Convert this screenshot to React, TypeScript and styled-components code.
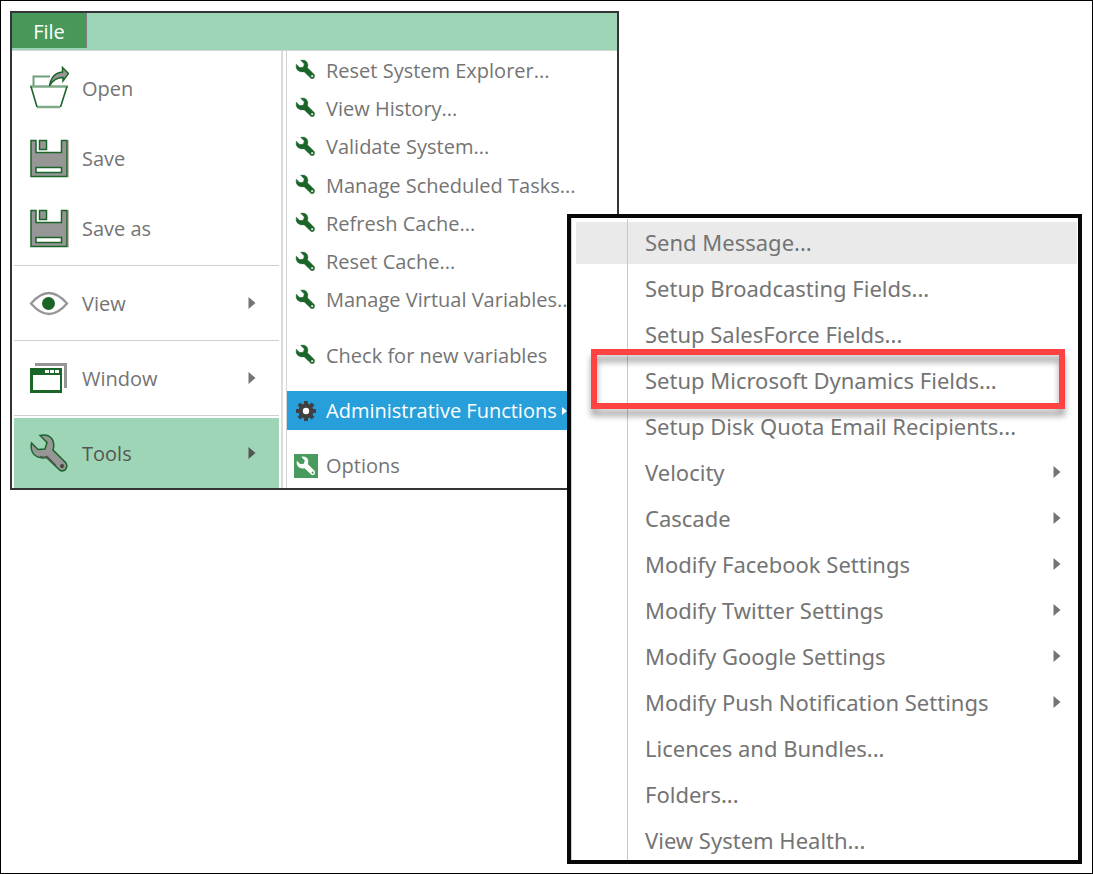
import React from "react";
import styled, { createGlobalStyle } from "styled-components";

const GlobalStyle = createGlobalStyle`
  *, *::before, *::after { box-sizing: border-box; }
  body {
    margin: 0;
    background: #fff;
    font-family: "Open Sans", "Noto Sans", sans-serif;
    color: #747474;
  }
  button { font: inherit; color: inherit; border: 0; background: none; padding: 0; text-align: left; }
  ul { list-style: none; margin: 0; padding: 0; }
`;

const Page = styled.main`
  min-height: 100vh;
  border: 1px solid #000;
  padding: 10px 9px;
`;

const Workspace = styled.div`
  position: relative;
`;

const FileMenu = styled.section`
  max-width: 609px;
  border: 2px solid #333436;
  background: #fff;
`;

const TabBar = styled.header`
  display: flex;
  align-items: flex-start;
  height: 38px;
  background: #9ed5b6;
  border-bottom: 1px solid #d4d4d4;
`;

const FileTab = styled.button`
  width: 75px;
  height: 35px;
  background: #489859;
  border-right: 1px solid #808080;
  color: #fff;
  font-size: 20px;
  line-height: 38px;
  text-align: center;
`;

const Columns = styled.div`
  display: flex;
`;

const MainColumn = styled.ul`
  flex: 0 0 271px;
  padding: 2px 2px 0;
  border-right: 2px solid #dcdcdc;
`;

const MainItem = styled.button<{ $active?: boolean }>`
  display: flex;
  align-items: center;
  width: 100%;
  height: 70px;
  padding: 0 23px 0 15px;
  font-size: 20px;
  color: ${(p) => (p.$active ? "#555" : "#747474")};
  background: ${(p) => (p.$active ? "#9ed5b6" : "transparent")};
`;

const MainLabel = styled.span`
  flex: 1;
  margin-left: 13px;
`;

const MainRule = styled.li`
  height: 5px;
  padding-top: 2px;
  &::before { content: ""; display: block; height: 1px; background: #cfcfcf; }
`;

const ToolColumn = styled.ul`
  flex: 1;
  display: flex;
  flex-direction: column;
  margin-left: 3px;
  padding-bottom: 3px;
  border-left: 1px solid #d4d4d4;
`;

const ToolEntry = styled.li`
  flex: 1;
  display: flex;
`;

const ToolItem = styled.button<{ $active?: boolean }>`
  display: flex;
  align-items: center;
  width: 100%;
  padding-left: 7px;
  font-size: 20px;
  line-height: 24px;
  white-space: nowrap;
  color: ${(p) => (p.$active ? "#fff" : "#747474")};
  background: ${(p) => (p.$active ? "#269fdb" : "transparent")};
`;

const ToolLabel = styled.span`
  margin: 0 5px 0 8px;
  padding-top: 1px;
`;

const ToolGap = styled.li`
  height: 17px;
`;

const Submenu = styled.ul`
  position: absolute;
  top: 203px;
  left: 557px;
  width: 515px;
  display: flex;
  flex-direction: column;
  gap: 4px;
  padding: 4px 1px 0 5px;
  border: 4px solid #080808;
  background: #fff;
  box-shadow: inset 1px 0 #d0d0d0;
  overflow: hidden;

  &::after {
    content: "";
    position: absolute;
    top: 1px;
    bottom: 0;
    left: 56px;
    width: 1px;
    background: #c8c8c8;
  }
`;

const SubEntry = styled.li`
  position: relative;
  &:last-child { margin-bottom: -2px; }
`;

const SubItem = styled.button<{ $hover?: boolean }>`
  display: flex;
  align-items: center;
  justify-content: space-between;
  width: 100%;
  height: 42px;
  padding: 0 16px 2px 69px;
  font-family: "Noto Sans", "Open Sans", sans-serif;
  font-size: 22px;
  white-space: nowrap;
  background: ${(p) => (p.$hover ? "#eaeaea" : "transparent")};
`;

const Highlight = styled.div`
  position: absolute;
  z-index: 1;
  top: -11px;
  left: 15px;
  right: 12px;
  height: 60px;
  border: 6px solid #ff4343;
  filter: drop-shadow(0 7px 3px rgba(0, 0, 0, 0.35));
  pointer-events: none;
`;

const Svg = styled.svg`
  display: block;
  flex: none;
`;

const GREEN = "#1b6529";
const GREY = "#969696";
const WRENCH =
  "M10 1.5Q18-.5 22 5Q25 10 23 16L36 29Q38 33 35 36Q31 38 29 35.5L16.5 23.5Q9 25 4 20.5Q0 16 1.5 9L8 15.5L15 15L17 8.5Z";

const Arrow = () => (
  <Svg width="8" height="12" viewBox="0 0 8 12" aria-hidden>
    <path d="M0.5 0L7.5 6L0.5 12Z" fill="currentColor" />
  </Svg>
);

const SmallArrow = () => (
  <Svg width="5" height="8" viewBox="0 0 5 8" aria-hidden>
    <path d="M0 0L5 4L0 8Z" fill="currentColor" />
  </Svg>
);

const BigIcon = ({ children }: { children: React.ReactNode }) => (
  <Svg width="40" height="44" viewBox="0 0 40 44" fill="none" aria-hidden>
    {children}
  </Svg>
);

const OpenIcon = () => (
  <BigIcon>
    <path d="M4.5 20V10.500H21" stroke="#6f9f79" strokeWidth="2" />
    <path d="M1 20.500H39M8 41H31" stroke="#7fab88" strokeWidth="2.500" />
    <path d="M2 20.500L8 41M38 20.500L31.500 41" stroke={GREEN} strokeWidth="1.600" />
    <path
      d="M20.500 20C22 11 27 6.500 33.500 6V1.500L39.500 7.500L34 15V11.500C28 11.500 24 13.500 20.500 20Z"
      fill={GREY}
      stroke={GREEN}
      strokeWidth="1.500"
    />
  </BigIcon>
);

const SaveIcon = () => (
  <BigIcon>
    <path d="M39.500 4V41.500" stroke="#c9b9b9" />
    <path d="M2 4.500H7V16.500H32.500V4.500H38V40.500H2Z" fill={GREY} stroke={GREEN} strokeWidth="1.500" />
    <path d="M10.500 4.500H17.500V13.500H10.500Z" fill={GREY} stroke={GREEN} strokeWidth="1.500" />
    <path d="M7 31.500H32.500V36.500H7Z" fill="#fff" stroke={GREEN} strokeWidth="1.500" />
  </BigIcon>
);

const ViewIcon = () => (
  <BigIcon>
    <path
      d="M2 22.500Q11 12 20 12Q29 12 38 22.500Q29 33 20 33Q11 33 2 22.500Z"
      fill="#fff"
      stroke={GREY}
      strokeWidth="2.300"
    />
    <circle cx="19.500" cy="22.500" r="6.500" fill={GREEN} />
  </BigIcon>
);

const WindowIcon = () => (
  <BigIcon>
    <path d="M6 8.500H36.500V32" stroke={GREY} strokeWidth="3" />
    <path d="M1 12H33V37H1Z" fill={GREEN} />
    <path d="M4 19H31V34H4Z" fill="#fff" />
    <path d="M16 14h4v3h-4zM21 14h4v3h-4zM26 14h4v3h-4z" fill="#fff" />
  </BigIcon>
);

const ToolsIcon = () => (
  <BigIcon>
    <g transform="translate(1 3)">
      <path d={WRENCH} fill={GREY} stroke={GREEN} strokeWidth="1.500" />
      <path d="M10 22.500Q14 24 17 22.500L26 31.500" stroke="#555" strokeWidth="1.500" />
      <circle cx="32" cy="32" r="2" fill="#444" />
    </g>
  </BigIcon>
);

const WrenchIcon = () => (
  <Svg width="24" height="24" viewBox="0 0 24 24" aria-hidden>
    <g transform="translate(1.500 1.500) scale(.52)">
      <path d={WRENCH} fill={GREEN} stroke={GREEN} />
      <circle cx="32" cy="32" r="2.200" fill="#cfe0d2" />
    </g>
  </Svg>
);

const GearIcon = () => (
  <Svg width="24" height="24" viewBox="0 0 24 24" aria-hidden>
    <g fill="#404040">
      {[0, 45, 90, 135].map((angle) => (
        <rect key={angle} x="10" y="2" width="4" height="20" transform={`rotate(${angle} 12 12)`} />
      ))}
      <circle cx="12" cy="12" r="7.500" />
    </g>
    <circle cx="12" cy="12" r="3.200" fill="#fff" />
  </Svg>
);

const OptionsIcon = () => (
  <Svg width="24" height="24" viewBox="0 0 24 24" aria-hidden>
    <path d="M0 0H24V24H0Z" fill="#489b5d" />
    <g transform="translate(2 2) scale(.52)">
      <path d={WRENCH} fill="#fff" />
      <circle cx="32" cy="32" r="2" fill="#489b5d" />
    </g>
  </Svg>
);

type MainEntry = { label: string; icon: React.ReactNode; ruled?: boolean; arrow?: boolean; active?: boolean };

const mainEntries: MainEntry[] = [
  { label: "Open", icon: <OpenIcon /> },
  { label: "Save", icon: <SaveIcon /> },
  { label: "Save as", icon: <SaveIcon /> },
  { label: "View", icon: <ViewIcon />, ruled: true, arrow: true },
  { label: "Window", icon: <WindowIcon />, ruled: true, arrow: true },
  { label: "Tools", icon: <ToolsIcon />, ruled: true, arrow: true, active: true },
];

const toolGroups = [
  [
    "Reset System Explorer...",
    "View History...",
    "Validate System...",
    "Manage Scheduled Tasks...",
    "Refresh Cache...",
    "Reset Cache...",
    "Manage Virtual Variables...",
  ],
  ["Check for new variables"],
  ["Administrative Functions"],
  ["Options"],
];

const adminEntries = [
  { label: "Send Message...", hover: true },
  { label: "Setup Broadcasting Fields..." },
  { label: "Setup SalesForce Fields..." },
  { label: "Setup Microsoft Dynamics Fields...", marked: true },
  { label: "Setup Disk Quota Email Recipients..." },
  { label: "Velocity", arrow: true },
  { label: "Cascade", arrow: true },
  { label: "Modify Facebook Settings", arrow: true },
  { label: "Modify Twitter Settings", arrow: true },
  { label: "Modify Google Settings", arrow: true },
  { label: "Modify Push Notification Settings", arrow: true },
  { label: "Licences and Bundles..." },
  { label: "Folders..." },
  { label: "View System Health..." },
];

const toolIcon = (label: string) => {
  if (label === "Administrative Functions") return <GearIcon />;
  if (label === "Options") return <OptionsIcon />;
  return <WrenchIcon />;
};

export default function App() {
  return (
    <Page>
      <GlobalStyle />
      <Workspace>
        <FileMenu>
          <TabBar>
            <FileTab type="button">File</FileTab>
          </TabBar>
          <Columns>
            <MainColumn>
              {mainEntries.map((entry) => (
                <React.Fragment key={entry.label}>
                  {entry.ruled && <MainRule role="separator" />}
                  <li>
                    <MainItem type="button" $active={entry.active}>
                      {entry.icon}
                      <MainLabel>{entry.label}</MainLabel>
                      {entry.arrow && <Arrow />}
                    </MainItem>
                  </li>
                </React.Fragment>
              ))}
            </MainColumn>
            <ToolColumn>
              {toolGroups.map((group, index) => (
                <React.Fragment key={group[0]}>
                  {index > 0 && <ToolGap role="separator" />}
                  {group.map((label) => {
                    const active = label === "Administrative Functions";
                    return (
                      <ToolEntry key={label}>
                        <ToolItem type="button" $active={active}>
                          {toolIcon(label)}
                          <ToolLabel>{label}</ToolLabel>
                          {active && <SmallArrow />}
                        </ToolItem>
                      </ToolEntry>
                    );
                  })}
                </React.Fragment>
              ))}
            </ToolColumn>
          </Columns>
        </FileMenu>
        <Submenu>
          {adminEntries.map((entry) => (
            <SubEntry key={entry.label}>
              <SubItem type="button" $hover={entry.hover}>
                <span>{entry.label}</span>
                {entry.arrow && <Arrow />}
              </SubItem>
              {entry.marked && <Highlight />}
            </SubEntry>
          ))}
        </Submenu>
      </Workspace>
    </Page>
  );
}
